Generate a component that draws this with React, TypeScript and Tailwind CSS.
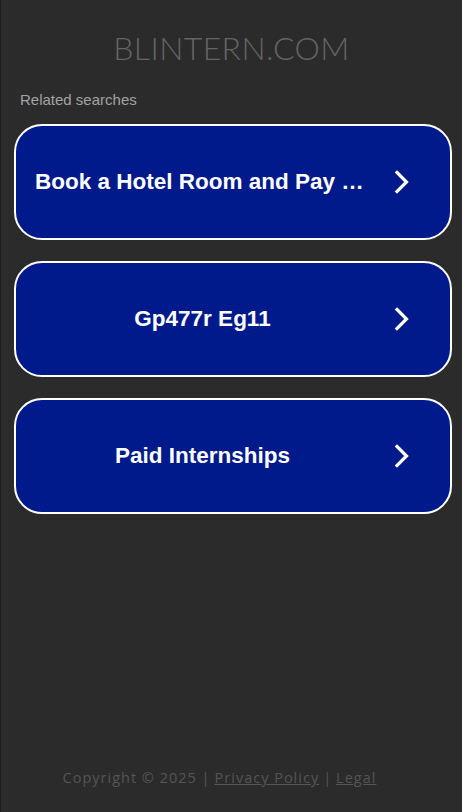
import React from "react";

const items = [
  { label: "Book a Hotel Room and Pay Later", left: true },
  { label: "Gp477r Eg11", left: false },
  { label: "Paid Internships", left: false },
];

function Chevron() {
  return (
    <svg width="16" height="24" viewBox="0 0 16 24" className="shrink-0">
      <path d="M3 2.5 L12.5 12 L3 21.5" fill="none" stroke="#ffffff" strokeWidth="3.2" strokeLinecap="square" />
    </svg>
  );
}

export default function App() {
  return (
    <div
      className="w-[462px] h-[812px] bg-[#2b2b2b] border-l border-[#1e1e1e] flex flex-col"
      style={{ fontFamily: '"Liberation Sans", Arial, sans-serif' }}
    >
      <div className="flex justify-center pt-[28px] h-[90px]">
        <span
          className="text-[32px] leading-[40px] font-light text-[#646464] tracking-[0.4px]"
          style={{ fontFamily: 'Lato, "Open Sans", sans-serif' }}
        >
          BLINTERN.COM
        </span>
      </div>
      <div className="pl-[19px] text-[15px] leading-[20px] text-[#a3a3a3]">Related searches</div>
      <div className="flex flex-col gap-[21px] pl-[13px] pr-[10px] mt-[14px]">
        {items.map((it) => (
          <div
            key={it.label}
            className="h-[116px] rounded-[28px] border-2 border-white bg-[#001a8b] flex items-center pl-[19px] pr-[40px]"
          >
            <div
              className={`flex-1 min-w-0 text-[22.5px] font-bold text-white truncate ${
                it.left ? "text-left pr-[24px]" : "text-center pr-[24px]"
              }`}
            >
              {it.label}
            </div>
            <Chevron />
          </div>
        ))}
      </div>
      <div className="flex-1" />
      <div
        className="pb-[23px] pr-[24px] flex justify-center text-[14.5px] tracking-[1px] text-[#555555]"
        style={{ fontFamily: '"Open Sans", sans-serif' }}
      >
        <span>Copyright © 2025 | </span>
        <span className="underline ml-[4px]">Privacy Policy</span>
        <span className="mx-[4px]">|</span>
        <span className="underline">Legal</span>
      </div>
    </div>
  );
}
